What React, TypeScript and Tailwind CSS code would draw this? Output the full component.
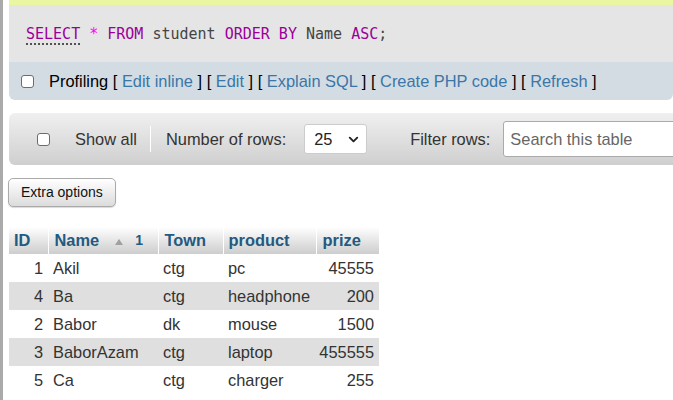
import { ChevronDown } from 'lucide-react';

const rows = [
  { id: 1, name: 'Akil', town: 'ctg', product: 'pc', prize: '45555' },
  { id: 4, name: 'Ba', town: 'ctg', product: 'headphone', prize: '200' },
  { id: 2, name: 'Babor', town: 'dk', product: 'mouse', prize: '1500' },
  { id: 3, name: 'BaborAzam', town: 'ctg', product: 'laptop', prize: '455555' },
  { id: 5, name: 'Ca', town: 'ctg', product: 'charger', prize: '255' },
];

const links = ['Edit inline', 'Edit', 'Explain SQL', 'Create PHP code', 'Refresh'];

function Check() {
  return <span className="inline-block w-[13px] h-[13px] rounded-[3px] border border-[#6d6d6d] bg-white shrink-0" />;
}

export default function App() {
  return (
    <div className="flex min-h-[400px] bg-white text-[16.4px] text-[#333]" style={{ fontFamily: '"Liberation Sans", Arial, sans-serif' }}>
      <div className="w-[3px] bg-[#aaaaaa] shrink-0" />
      <div className="flex-1 pl-[6px] overflow-hidden">
        <div className="h-[5px] bg-[#eaf6a2]" />
        <div className="h-[57px] bg-[#e5e5e5] flex items-center pl-[17px] pt-[2px]">
          <code className="text-[15px] text-[#444] whitespace-pre" style={{ fontFamily: '"DejaVu Sans Mono", monospace' }}>
            <span className="text-[#990099] underline decoration-dotted decoration-[#222] underline-offset-[4px]">SELECT</span>
            {' '}<span className="text-[#ff00ff]">*</span>{' '}
            <span className="text-[#990099]">FROM</span> student{' '}
            <span className="text-[#990099]">ORDER BY</span> Name{' '}
            <span className="text-[#990099]">ASC</span>;
          </code>
        </div>
        <div className="h-[38px] bg-[#d3dce3] rounded-b-md flex items-center pl-[12px] gap-[15px]">
          <Check />
          <span className="text-black whitespace-pre">
            Profiling
            {links.map((l) => (
              <span key={l}>
                {' [ '}
                <span className="text-[#3a76a8]">{l}</span>
                {' ]'}
              </span>
            ))}
          </span>
        </div>

        <div className="mt-[13px] h-[52px] w-[800px] rounded-md bg-gradient-to-b from-[#f0f0f0] to-[#cfcfcf] flex items-center pl-[28px]">
          <Check />
          <span className="ml-[25px] text-[#333]">Show all</span>
          <span className="ml-[13px] w-px h-[26px] bg-[#aaa] border-r border-white" />
          <span className="ml-[15px] text-[#333]">Number of rows:</span>
          <div className="ml-[18px] w-[63px] h-[30px] bg-white border border-[#ccc] rounded-[3px] flex items-center justify-between pl-[9px] pr-[5px] text-[#222]">
            <span>25</span>
            <ChevronDown size={15} strokeWidth={3} className="text-[#222]" />
          </div>
          <span className="ml-[43px] text-[#333]">Filter rows:</span>
          <div className="ml-[13px] w-[250px] h-[36px] bg-white border border-[#aaa] rounded-[3px] flex items-center pl-[6px] text-[#666]">
            Search this table
          </div>
        </div>

        <button className="mt-[13px] -ml-[1px] h-[29px] px-[12px] rounded-[5px] border border-[#aaa] bg-gradient-to-b from-white to-[#dcdcdc] text-[14px] text-[#111] shadow-[0_1px_1px_rgba(0,0,0,0.15)]">
          Extra options
        </button>

        <table className="mt-[20px] border-collapse">
          <thead>
            <tr className="h-[27px] bg-gradient-to-b from-white to-[#cdcdcd] text-[#235a81] font-bold text-left">
              <th className="w-[39px] pl-[5px] font-bold">ID</th>
              <th className="w-[110px] pl-[6px] border-l border-white font-bold">
                <span className="flex items-center">
                  Name
                  <svg width="8" height="6" viewBox="0 0 8 6" className="ml-[16px] mt-[3px]">
                    <path d="M4 0 L8 6 L0 6 Z" fill="#a0a0a0" />
                  </svg>
                  <span className="ml-[12px] text-[14px]">1</span>
                </span>
              </th>
              <th className="w-[65px] pl-[6px] border-l border-white font-bold">Town</th>
              <th className="w-[93px] pl-[5px] border-l border-white font-bold">product</th>
              <th className="w-[63px] pl-[6px] border-l border-white font-bold">prize</th>
            </tr>
          </thead>
          <tbody>
            {rows.map((r, i) => (
              <tr key={r.id} className={`h-[28px] ${i % 2 === 1 ? 'bg-[#dfdfdf]' : 'bg-white'} text-[#333]`}>
                <td className="text-right pr-[5px]">{r.id}</td>
                <td className="pl-[5px]">{r.name}</td>
                <td className="pl-[5px]">{r.town}</td>
                <td className="pl-[5px]">{r.product}</td>
                <td className="text-right pr-[5px]">{r.prize}</td>
              </tr>
            ))}
          </tbody>
        </table>
      </div>
    </div>
  );
}
